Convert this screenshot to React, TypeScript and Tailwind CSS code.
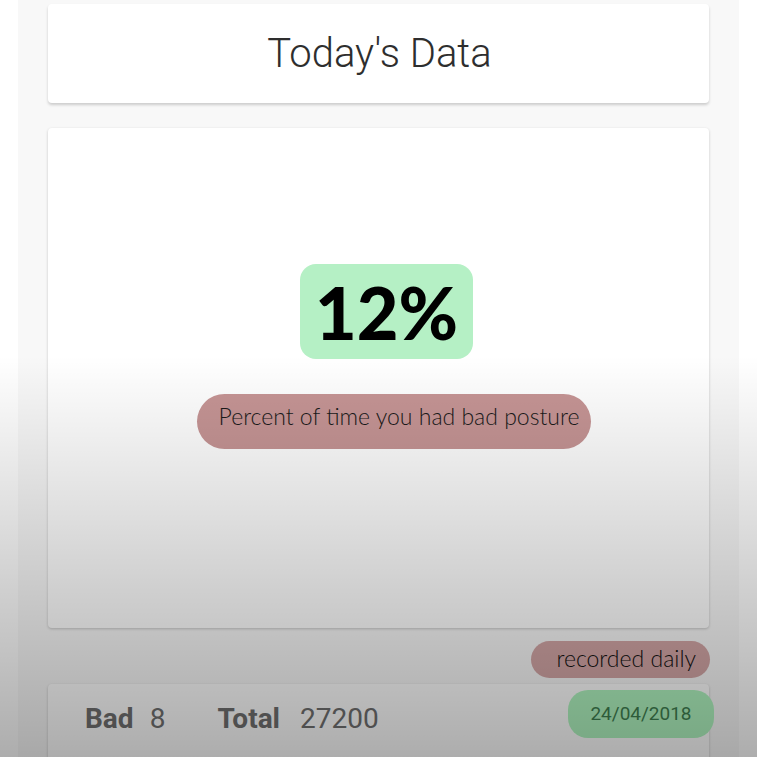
export default function App() {
  return (
    <div className="relative min-h-screen h-[757px] overflow-hidden bg-white font-['Roboto',sans-serif]">
      {/* main column */}
      <div className="mx-[18px] h-full bg-[#f8f8f8] px-[30px] pt-[4px]">
        {/* header card */}
        <div className="flex h-[99px] items-center justify-center rounded-[4px] bg-white shadow-[0_2px_3px_rgba(0,0,0,0.18)]">
          <h1 className="ml-[2px] text-[40px] font-light text-[#2e2e2e]">Today's Data</h1>
        </div>

        {/* main stat card */}
        <div className="mt-[25px] flex h-[500px] flex-col items-start rounded-[4px] bg-white pt-[136px] shadow-[0_1px_3px_rgba(0,0,0,0.2)]">
          <div className="ml-[252px] flex h-[95px] w-[173px] items-center justify-center rounded-[16px] bg-[#b5f0c5]">
            <span className="font-['Lato',sans-serif] text-[72px] font-black leading-none text-black">12%</span>
          </div>
          <div className="ml-[149px] mt-[35px] flex h-[55px] w-[394px] items-center justify-center rounded-full bg-[#c69595] pb-[10px] pl-[10px]">
            <span className="font-['Lato',sans-serif] text-[23px] font-light text-[#1a1a1a]">Percent of time you had bad posture</span>
          </div>
        </div>

        {/* recorded daily tag */}
        <div className="mt-[13px] flex justify-end">
          <div className="mr-[-1px] flex h-[37px] w-[179px] items-center justify-end rounded-full bg-[#d3a6a6] pb-[2px] pr-[14px]">
            <span className="font-['Lato',sans-serif] text-[23px] font-light text-[#111111]">recorded daily</span>
          </div>
        </div>

        {/* totals card */}
        <div className="relative mt-[6px] flex h-[90px] items-start rounded-[4px] bg-white pl-[37px] pt-[14px] shadow-[0_1px_3px_rgba(0,0,0,0.2)]">
          <div className="flex items-baseline text-[28px] text-[#707070]">
            <span className="font-bold">Bad</span>
            <span className="ml-[16px]">8</span>
            <span className="ml-[52px] font-bold">Total</span>
            <span className="ml-[20px]">27200</span>
          </div>
          <div className="absolute right-[-5px] top-[6px] flex h-[48px] w-[146px] items-center justify-center rounded-[20px] bg-[#b0f5c0]">
            <span className="text-[19px] text-[#3f7f50]">24/04/2018</span>
          </div>
        </div>
      </div>

      {/* dimming gradient */}
      <div className="pointer-events-none absolute inset-0 bg-[linear-gradient(to_bottom,rgba(0,0,0,0)_0%,rgba(0,0,0,0)_47%,rgba(0,0,0,0.32)_100%)]" />
    </div>
  );
}
